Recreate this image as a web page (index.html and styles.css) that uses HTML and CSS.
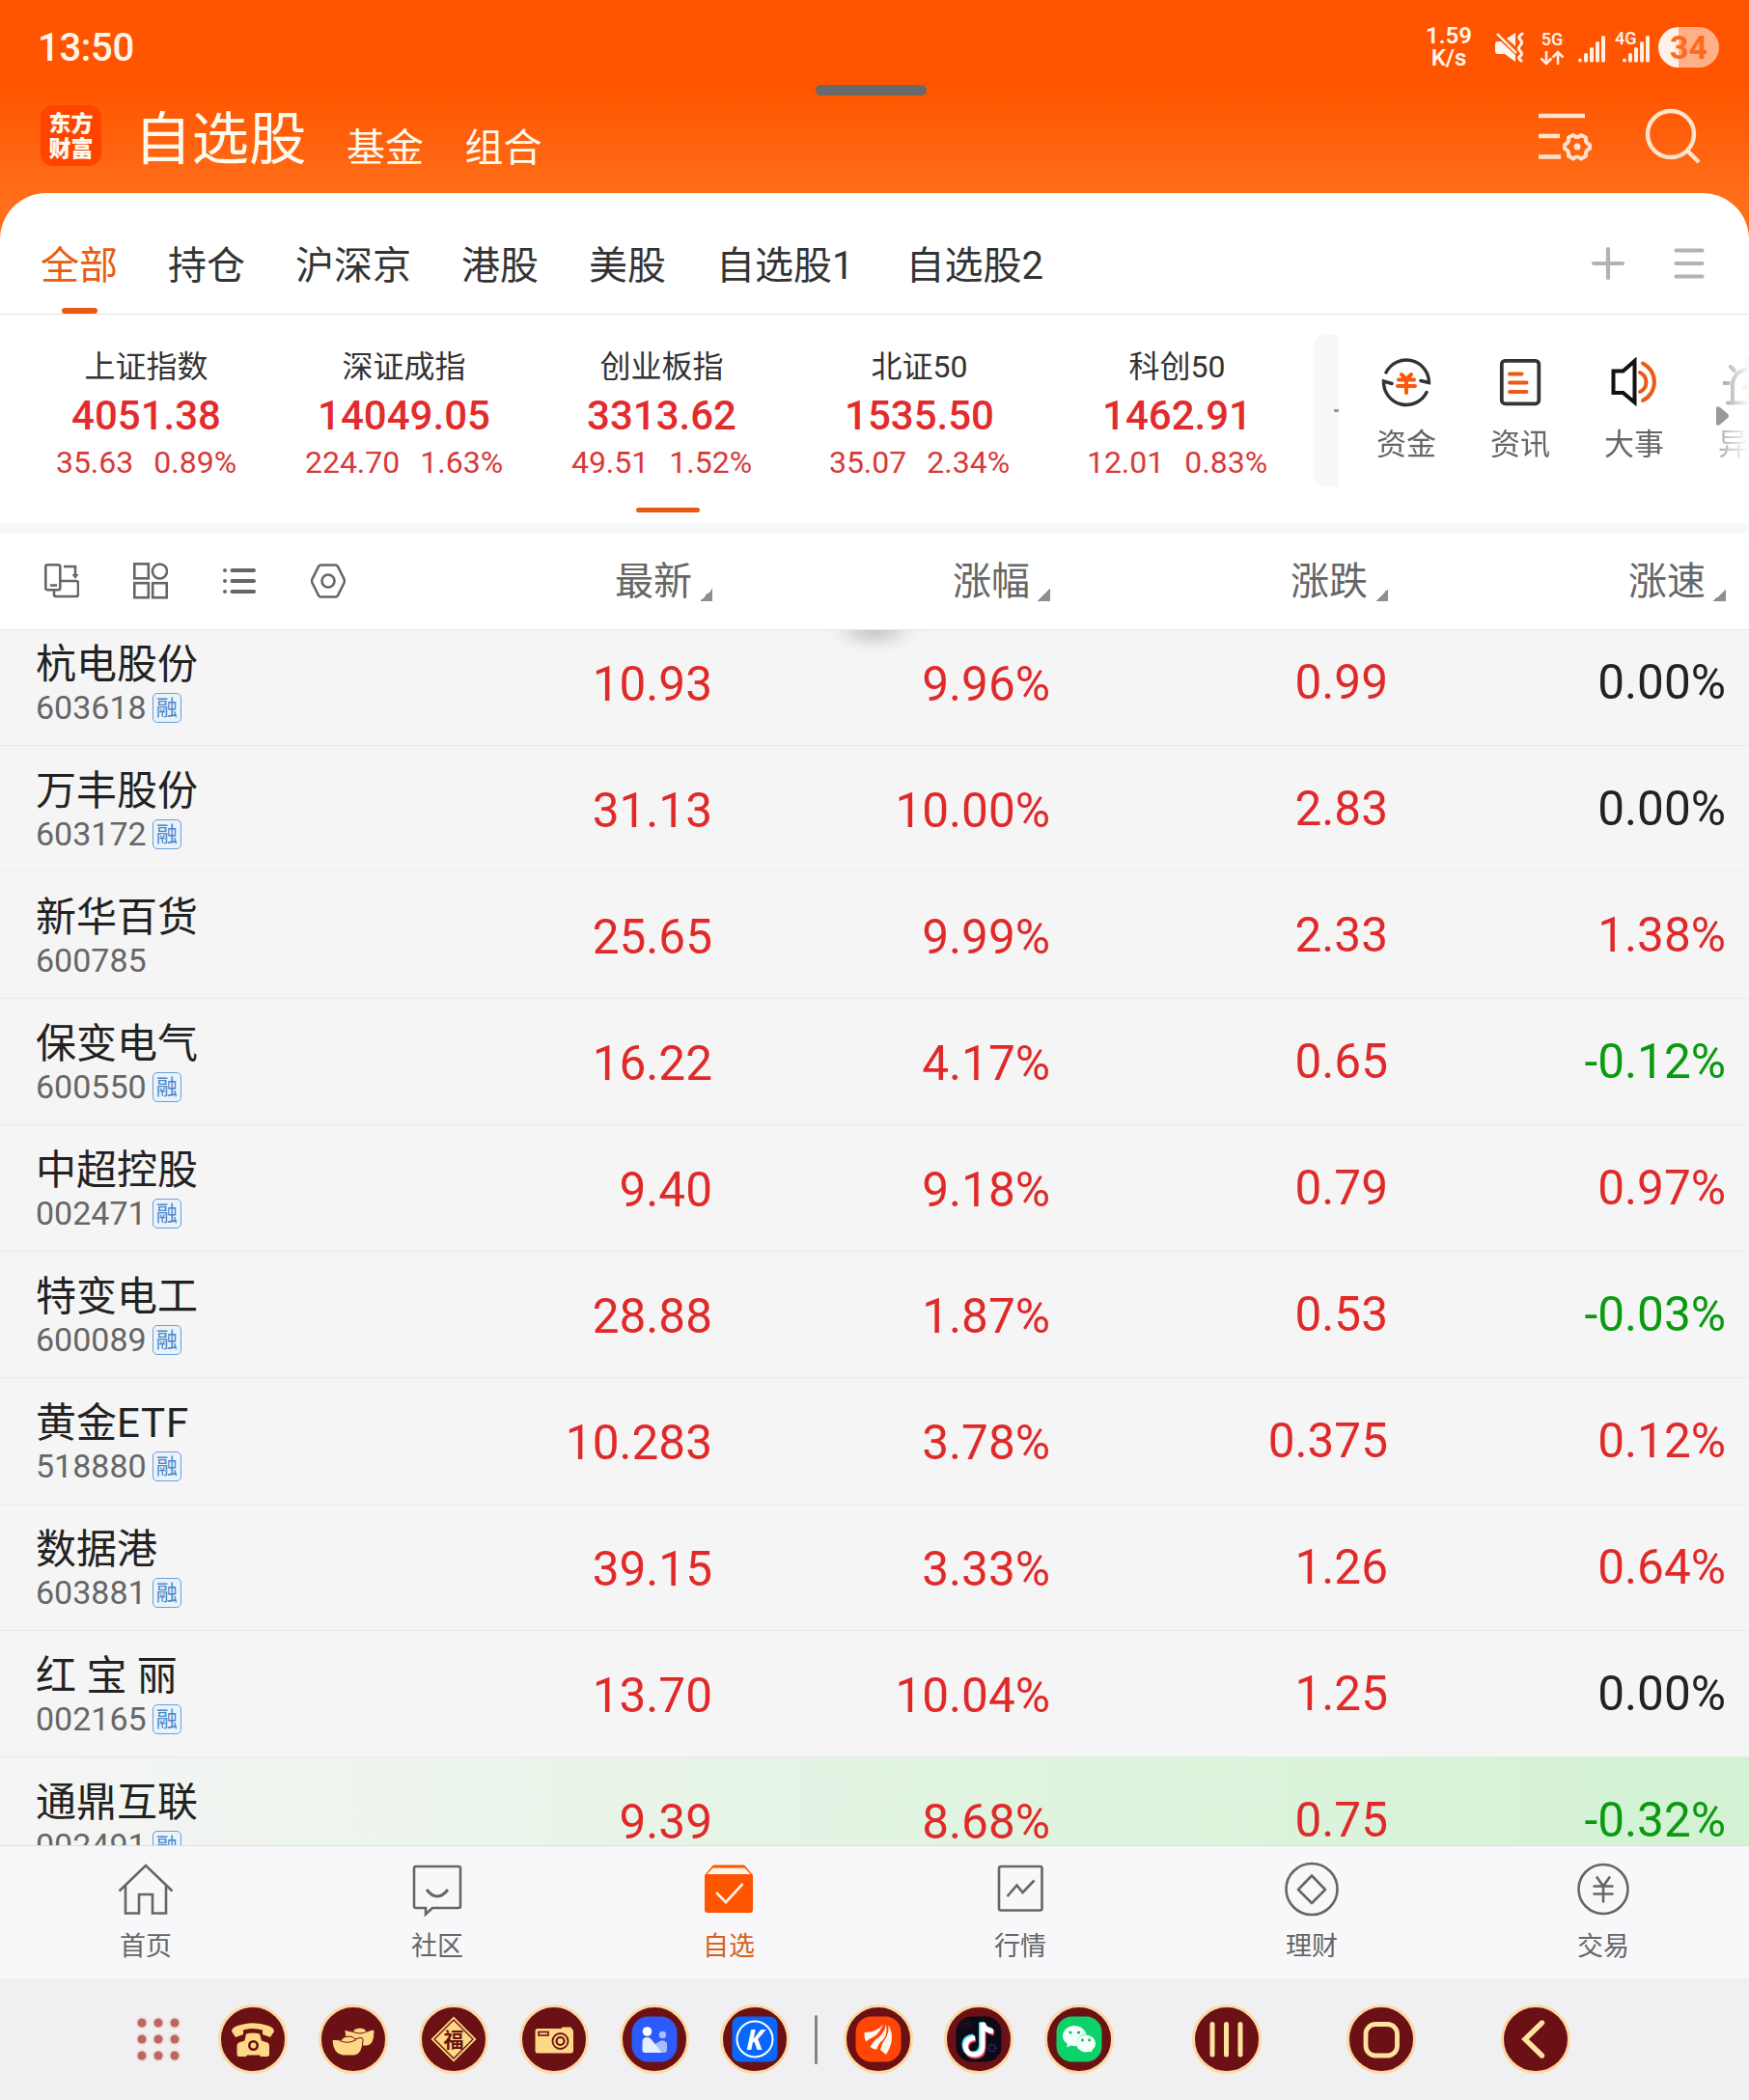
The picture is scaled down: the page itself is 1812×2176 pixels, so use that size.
FILE: index.html
```html
<!DOCTYPE html>
<html lang="zh-CN">
<head>
<meta charset="utf-8">
<title>自选股</title>
<link rel="stylesheet" href="styles.css">
</head>
<body>
<header class="top">
  <div class="status">
    <span class="clock">13:50</span>
    <div class="status-right">
      <div class="speed"><span>1.59</span><span>K/s</span></div>
      <svg class="mute" width="32" height="32" viewBox="0 0 32 32"><path fill="#fff6ee" d="M2 10h5l15 14v7L11 23H4q-3 0-3-3v-7q0-2 1-3zM13 7l9-6v14z"/><path d="M3 2l20 20" stroke="#fff6ee" stroke-width="2.400"/><path d="M29 2q-5 3-2 6t0 6q-3 3 0 6t0 5q-3 2 1 5" fill="none" stroke="#fff6ee" stroke-width="3" stroke-linecap="round"/></svg>
      <div class="net"><span class="net-label">5G</span><svg width="28" height="16" viewBox="0 0 28 16"><path d="M8 1v12M2.500 8.500L8 14l5.500-5.500M20 15V3M14.500 7.500L20 2l5.500 5.500" fill="none" stroke="#ffece0" stroke-width="2.600"/></svg></div>
      <svg class="bars" width="28" height="28" viewBox="0 0 28 28" fill="#fff0e4"><circle cx="2" cy="25.500" r="2"/><rect x="6" y="18" width="4" height="9.500" rx="1.500"/><rect x="12" y="12" width="4" height="15.500" rx="1.500"/><rect x="18" y="6" width="4" height="21.500" rx="1.500"/><rect x="24" y="0" width="4" height="27.500" rx="1.500"/></svg>
      <div class="sim"><span class="net-label">4G</span><svg width="28" height="28" viewBox="0 0 28 28" fill="#fff0e4"><circle cx="2" cy="25.500" r="2"/><rect x="6" y="18" width="4" height="9.500" rx="1.500"/><rect x="12" y="12" width="4" height="15.500" rx="1.500"/><rect x="18" y="6" width="4" height="21.500" rx="1.500"/><rect x="24" y="0" width="4" height="27.500" rx="1.500"/></svg></div>
      <span class="battery">34</span>
    </div>
    <i class="handle"></i>
  </div>
  <div class="title">
    <div class="logo"><span>东方</span><span>财富</span></div>
    <h1>自选股</h1>
    <span class="sub">基金</span>
    <span class="sub">组合</span>
    <div class="title-icons">
      <svg width="56" height="52" viewBox="0 0 56 52" fill="none" stroke="#ffe3cf" stroke-width="4.600"><path d="M0 4h48M0 25h22M0 46.500h23"/><path stroke-width="4" stroke-linejoin="round" d="M36 24q4 4 8 0l5 2.500q-1 5.500 4 7.500v4q-5 2-4 7.500l-5 3q-4-4-8 0l-5-3q1-5.500-4-7.500v-4q5-2 4-7.500z"/><circle cx="40" cy="36" r="3.500" fill="#ffe3cf" stroke="none"/></svg>
      <svg width="58" height="60" viewBox="0 0 58 60" fill="none" stroke="#ffe3cf" stroke-width="4.400"><circle cx="27" cy="27" r="24"/><path d="M43.500 43.500L56 56"/></svg>
    </div>
  </div>
</header>

<section class="sheet">
  <nav class="tabs">
    <span class="tab active">全部</span><span class="tab">持仓</span><span class="tab">沪深京</span><span class="tab">港股</span><span class="tab">美股</span><span class="tab">自选股1</span><span class="tab">自选股2</span>
    <div class="tab-tools">
      <svg width="36" height="36" viewBox="0 0 36 36" stroke="#b3b3b3" stroke-width="4.200" stroke-linecap="round"><path d="M18 3v30M3 18h30"/></svg>
      <svg width="32" height="36" viewBox="0 0 32 36" stroke="#b3b3b3" stroke-width="4.200" stroke-linecap="round"><path d="M2.500 4.500h27M2.500 18h27M2.500 31.500h27"/></svg>
    </div>
  </nav>

  <div class="market">
    <div class="indices">
      <div class="index"><span class="iname">上证指数</span><b>4051.38</b><p><span>35.63</span><span>0.89%</span></p></div>
      <div class="index"><span class="iname">深证成指</span><b>14049.05</b><p><span>224.70</span><span>1.63%</span></p></div>
      <div class="index"><span class="iname">创业板指</span><b>3313.62</b><p><span>49.51</span><span>1.52%</span></p></div>
      <div class="index"><span class="iname">北证50</span><b>1535.50</b><p><span>35.07</span><span>2.34%</span></p></div>
      <div class="index"><span class="iname">科创50</span><b>1462.91</b><p><span>12.01</span><span>0.83%</span></p></div>
      <i class="pager"></i>
    </div>
    <div class="drawer"><i></i></div>
    <div class="shortcuts">
      <div class="shortcut"><svg width="52" height="52" viewBox="0 0 52 52" fill="none" stroke="#333" stroke-width="3.400"><path stroke-linecap="round" d="M5 16A23.500 23.500 0 0 1 49.500 26.500L41 24.500M47 36.500A23.500 23.500 0 0 1 2.500 25L11 27.500"/><path stroke="#f9570a" stroke-width="4" stroke-linecap="round" d="M21 18l5 5 5-5M26 24v13M18 23.500h16M17 30h18"/></svg><span>资金</span></div>
      <div class="shortcut"><svg width="52" height="52" viewBox="0 0 52 52" fill="none"><rect x="6.800" y="3.800" width="38.500" height="44.500" rx="3.500" stroke="#333" stroke-width="3.800"/><path d="M15 17.500h12.500M15 26.500h17.500M15 36h17.500" stroke="#ea5b18" stroke-width="4" stroke-linecap="round"/></svg><span>资讯</span></div>
      <div class="shortcut"><svg width="52" height="52" viewBox="0 0 52 52" fill="none" stroke-width="4"><path stroke="#111" d="M4.500 14.500h10L26.500 4v43L14.500 37H4.500z"/><path stroke="#ea5b18" stroke-linecap="round" d="M32 16a11 11 0 0 1 0 20M35 6.500a21.500 21.500 0 0 1 0 38.500"/></svg><span>大事</span></div>
      <div class="shortcut"><svg width="52" height="52" viewBox="0 0 52 52" fill="none" stroke="#444" stroke-width="4" stroke-linecap="round"><path d="M10 47V29a16 16 0 0 1 32 0v18M5 47.500h42M1 27h5M8 10l4 4M26 2v6"/><path stroke="#f60" d="M28 24l-5 8h7l-4 7"/></svg><span>异动</span></div>
    </div>
    <svg class="more" width="14" height="20" viewBox="0 0 14 20"><path fill="#999" d="M0 2q0-3 4-1l8 7q2 2 0 4l-8 7q-4 2-4-1z"/></svg>
  </div>
</section>

<div class="cols head">
  <div class="tools">
    <svg width="36" height="36" viewBox="0 0 36 36" fill="none" stroke="#666" stroke-width="2.600"><rect x="1.300" y="1.300" width="15" height="26" rx="2"/><path d="M10 28v4q0 2 2 2h21q2 0 2-2V20q0-2-2-2H17M6 22.500h7M20 3h12v9"/><path d="M28.500 11h7L32 16z" fill="#666" stroke="none"/></svg>
    <svg width="36" height="38" viewBox="0 0 36 38" fill="none" stroke="#666" stroke-width="2.600"><rect x="1.300" y="1.300" width="14.500" height="15"/><circle cx="27.500" cy="9" r="7.500"/><rect x="1.300" y="21.200" width="14.500" height="15"/><rect x="20.200" y="21.200" width="14.500" height="15"/></svg>
    <svg width="36" height="30" viewBox="0 0 36 30" stroke="#666" stroke-width="4" stroke-linecap="round"><path d="M3 4h.01M3 15h.01M3 26h.01M10.500 4H33M10.500 15H33M10.500 26H33"/></svg>
    <svg width="36" height="36" viewBox="0 0 36 36" fill="none" stroke="#666" stroke-width="2.600"><path stroke-linejoin="round" d="M10.500 1.500h15q1.500 0 2.500 1.500l6.500 13q.8 2 0 4L28 33q-1 1.500-2.500 1.500h-15Q9 34.500 8 33L1.500 20q-.8-2 0-4L8 3q1-1.500 2.500-1.500z"/><circle cx="18" cy="18" r="6.500"/></svg>
  </div>
  <div class="th">最新<i></i></div><div class="th">涨幅<i></i></div><div class="th">涨跌<i></i></div><div class="th">涨速<i></i></div>
</div>

<main class="list">
  <i class="pull"></i>
  <div class="cols row"><div class="stock"><span class="name">杭电股份</span><span class="code">603618<em>融</em></span></div><span class="v up">10.93</span><span class="v up">9.96%</span><span class="v up">0.99</span><span class="v">0.00%</span></div>
  <div class="cols row"><div class="stock"><span class="name">万丰股份</span><span class="code">603172<em>融</em></span></div><span class="v up">31.13</span><span class="v up">10.00%</span><span class="v up">2.83</span><span class="v">0.00%</span></div>
  <div class="cols row"><div class="stock"><span class="name">新华百货</span><span class="code">600785</span></div><span class="v up">25.65</span><span class="v up">9.99%</span><span class="v up">2.33</span><span class="v up">1.38%</span></div>
  <div class="cols row"><div class="stock"><span class="name">保变电气</span><span class="code">600550<em>融</em></span></div><span class="v up">16.22</span><span class="v up">4.17%</span><span class="v up">0.65</span><span class="v down">-0.12%</span></div>
  <div class="cols row"><div class="stock"><span class="name">中超控股</span><span class="code">002471<em>融</em></span></div><span class="v up">9.40</span><span class="v up">9.18%</span><span class="v up">0.79</span><span class="v up">0.97%</span></div>
  <div class="cols row"><div class="stock"><span class="name">特变电工</span><span class="code">600089<em>融</em></span></div><span class="v up">28.88</span><span class="v up">1.87%</span><span class="v up">0.53</span><span class="v down">-0.03%</span></div>
  <div class="cols row"><div class="stock"><span class="name">黄金<span class="latin">ETF</span></span><span class="code">518880<em>融</em></span></div><span class="v up">10.283</span><span class="v up">3.78%</span><span class="v up">0.375</span><span class="v up">0.12%</span></div>
  <div class="cols row"><div class="stock"><span class="name">数据港</span><span class="code">603881<em>融</em></span></div><span class="v up">39.15</span><span class="v up">3.33%</span><span class="v up">1.26</span><span class="v up">0.64%</span></div>
  <div class="cols row"><div class="stock"><span class="name">红 宝 丽</span><span class="code">002165<em>融</em></span></div><span class="v up">13.70</span><span class="v up">10.04%</span><span class="v up">1.25</span><span class="v">0.00%</span></div>
  <div class="cols row flash"><div class="stock"><span class="name">通鼎互联</span><span class="code">002491<em>融</em></span></div><span class="v up">9.39</span><span class="v up">8.68%</span><span class="v up">0.75</span><span class="v down">-0.32%</span></div>
</main>

<nav class="bottom">
  <div class="nav"><svg width="58" height="58" viewBox="0 0 58 58"><path d="M1.500 30.500L29 4l27.500 26.500M8 25v28.500h14V34h14v19.500h14V25"/></svg><span>首页</span></div>
  <div class="nav"><svg width="58" height="58" viewBox="0 0 58 58"><path d="M7 5h44q2 0 2 2v39q0 2-2 2H24l-7 6.500V48H7q-2 0-2-2V7q0-2 2-2z"/><path stroke-width="3" d="M18 29q11 14 22 0"/></svg><span>社区</span></div>
  <div class="nav on"><svg width="58" height="58" viewBox="0 0 58 58"><path fill="#ff5500" stroke="none" d="M4 14l8-9.500Q13 3.500 14 3.500h30q1 0 2 1l8 9.500v36q0 3-3 3H7q-3 0-3-3z"/><path fill="#fff3ea" stroke="none" d="M12.500 6.500h33l6 6.500H6.500z"/><path stroke="#fff3ea" d="M16 32l10 10 17.500-19"/></svg><span>自选</span></div>
  <div class="nav"><svg width="58" height="58" viewBox="0 0 58 58"><rect x="7" y="5" width="44.500" height="45.500" rx="2"/><path d="M15.500 36l10-11.500 6 7.500L43.500 19.500"/></svg><span>行情</span></div>
  <div class="nav"><svg width="58" height="58" viewBox="0 0 58 58"><circle cx="29" cy="28.500" r="26.500"/><path stroke-linejoin="round" d="M29 14.500l14 14.500L29 43 15 29z"/></svg><span>理财</span></div>
  <div class="nav"><svg width="58" height="58" viewBox="0 0 58 58"><circle cx="29" cy="28.500" r="25.500"/><path d="M22 15.500l7 10 7-10M29 25.500v17M18.500 25.500h21M18.500 33.500h21"/></svg><span>交易</span></div>
</nav>

<footer class="dock">
  <svg class="grid" width="52" height="52" viewBox="0 0 52 52"><g fill="#f1dddc"><circle cx="9" cy="9" r="6.500"/><circle cx="26" cy="9" r="6.500"/><circle cx="43" cy="9" r="6.500"/><circle cx="9" cy="26" r="6.500"/><circle cx="26" cy="26" r="6.500"/><circle cx="43" cy="26" r="6.500"/><circle cx="9" cy="43" r="6.500"/><circle cx="26" cy="43" r="6.500"/><circle cx="43" cy="43" r="6.500"/></g><g fill="#ba675e"><circle cx="9" cy="9" r="4.500"/><circle cx="26" cy="9" r="4.500"/><circle cx="43" cy="9" r="4.500"/><circle cx="9" cy="26" r="4.500"/><circle cx="26" cy="26" r="4.500"/><circle cx="43" cy="26" r="4.500"/><circle cx="9" cy="43" r="4.500"/><circle cx="26" cy="43" r="4.500"/><circle cx="43" cy="43" r="4.500"/></g></svg>
  <div class="apps">
    <svg class="app" viewBox="0 0 72 72"><circle class="disc" cx="36" cy="36" r="34.500"/><path fill="#fed885" d="M14 28Q14 24 20 22Q36 16.500 52 22Q58 24 58 28L54 34L46 31V26.500Q36 23.500 26 26.500V31L18 34zM29 30.500q7-2 14 0l2 7 6 2q2 1 2 3v9q0 2.500-2.500 2.500H44l-1-1.500H30L29 54h-7q-2.500 0-2.500-2.500v-9q0-2 2-3l6-2z"/><circle cx="36.500" cy="42.500" r="4.200" fill="none" stroke="#6b1014" stroke-width="2.600"/></svg>
    <svg class="app" viewBox="0 0 72 72"><circle class="disc" cx="36" cy="36" r="34.500"/><g fill="#fed885" stroke="#6b1014" stroke-width="1"><path d="M27 28q-1-2 3-1 3 1 5 1 3-4 8-4t7 4l6-2q2 0 2 2 0 14-8 15H37q-9-1-10-15z"/><path d="M35 28q8 4 15 0" fill="none"/><path d="M14 38q0-2.500 4-1.500l5 .5q3-4 8-4 5 0 7 3l5-1.500q3-.5 3 2 0 15-9 16.500H25Q15 51 14 38z"/><path d="M22 37.500q9 4 17-1" fill="none"/></g></svg>
    <svg class="app" viewBox="0 0 72 72"><circle class="disc" cx="36" cy="36" r="34.500"/><path fill="#fed885" d="M36 12.500L59.500 36 36 59.500 12.500 36z"/><path fill="none" stroke="#6b1014" stroke-width="1.300" d="M36 16L56 36 36 56 16 36z"/><text x="36" y="43.500" text-anchor="middle" class="fu">福</text></svg>
    <svg class="app" viewBox="0 0 72 72"><circle class="disc" cx="36" cy="36" r="34.500"/><path fill="#fed885" d="M18.500 25H44v-1.500h10V25q2 .5 2 3v20q0 2.500-2.500 2.500h-35Q16.500 50.500 16.500 48V27.500q0-2.500 2-2.500z"/><g fill="none" stroke="#6b1014"><rect x="20" y="28.500" width="10" height="3.500" stroke-width="1.600"/><circle cx="42.500" cy="38" r="8" stroke-width="1.800"/><circle cx="42.500" cy="38" r="4" stroke-width="2.200"/></g></svg>
    <svg class="app" viewBox="0 0 72 72"><circle class="disc" cx="36" cy="36" r="34.500"/><rect x="12.500" y="12.500" width="47" height="47" rx="17" fill="#2b5bfb"/><g fill="#a9bcfd"><circle cx="44.500" cy="31.500" r="3.700"/><path d="M35 50V42l5-3q5-4 9 1v7q0 3-3 3z"/></g><circle cx="28.500" cy="28" r="4.800" fill="#fff"/><path fill="#e9eefe" d="M23.500 39q0-5 5-5 3 0 5 3l10 13H26.500q-3 0-3-3z"/></svg>
    <svg class="app" viewBox="0 0 72 72"><circle class="disc" cx="36" cy="36" r="34.500"/><rect x="12.500" y="12.500" width="47" height="47" rx="8" fill="#0867fc"/><circle cx="36" cy="36" r="18.500" fill="none" stroke="#fff" stroke-width="2"/><text x="36" y="46.500" text-anchor="middle" class="kay">K</text></svg>
  </div>
  <i class="rule"></i>
  <div class="apps recent">
    <svg class="app" viewBox="0 0 72 72"><circle class="disc" cx="36" cy="36" r="34.500"/><rect x="12.500" y="12.500" width="47" height="47" rx="16" fill="#ff4604"/><path fill="#fff6f0" d="M21.500 29q13 0 19.500-8.500-3 8-9 12.500-6 3-9 5.500-2-4.500-1.500-9.500zM27.500 44q3-6 9-10 6-5 7.500-13.500Q46 31 40.500 37q-5 4-6 9.500-4 0-7-2.500zM38 47q1-6 5-11 4-6 3.500-14.500 8 14-2.500 30.500-3-2.500-6-5z"/></svg>
    <svg class="app" viewBox="0 0 72 72"><circle class="disc" cx="36" cy="36" r="34.500"/><rect x="12.500" y="12.500" width="47" height="47" rx="16" fill="#0d0a17"/><g fill="none" stroke="#6b2440" stroke-dasharray="1 2"><circle cx="22" cy="21" r="5"/><circle cx="22" cy="21" r="2"/></g><circle cx="50" cy="45" r="3.500" fill="none" stroke="#443a9c" stroke-width="2" stroke-dasharray="1 1.500"/><g fill="none" stroke-width="5"><path stroke="#45e4ea" d="M30.500 33q-10 1-9.500 10 1 8 9 8t8.500-9V18.500q2 7.500 11 8"/><path stroke="#f4406a" d="M33 36q-10 1-9.500 10 1 8 9 8t8.500-9V20q2 7.500 11 10"/><path stroke="#fff" d="M32 34.500q-10 1-9.500 9.500 1 8 9 8t8.500-9V19q2 8 11 9"/></g></svg>
    <svg class="app" viewBox="0 0 72 72"><circle class="disc" cx="36" cy="36" r="34.500"/><rect x="12.500" y="12.500" width="47" height="47" rx="16" fill="#0cd269"/><path fill="#f4fff9" d="M31 22c-7 0-12 5-12 11 0 3 2 6 5 8l-1 3.500 4.500-2q3 1 6 .5c-1-8 4-12 10-12C42 25.500 37 22 31 22z"/><ellipse cx="43" cy="40.500" rx="10" ry="9" fill="#f4fff9"/><path fill="#f4fff9" d="M44 48l5.500 1.500-1-4z"/><g fill="#0cb75c"><circle cx="27" cy="29" r="1.600"/><circle cx="35.500" cy="29" r="1.600"/><circle cx="39.500" cy="37" r="1.400"/><circle cx="46.500" cy="37" r="1.400"/></g></svg>
  </div>
  <div class="keys">
    <svg class="app" viewBox="0 0 72 72"><circle class="disc" cx="36" cy="36" r="34.500"/><path stroke="#ffe3a0" stroke-width="5" stroke-linecap="round" d="M21 20.500v31.500M35.500 20.500v31.500M50 20.500v31.500"/></svg>
    <svg class="app" viewBox="0 0 72 72"><circle class="disc" cx="36" cy="36" r="34.500"/><rect x="20" y="20.500" width="32.500" height="32.500" rx="10" fill="none" stroke="#ffe3a0" stroke-width="4.800"/></svg>
    <svg class="app" viewBox="0 0 72 72"><circle class="disc" cx="36" cy="36" r="34.500"/><path fill="none" stroke="#ffe3a0" stroke-width="5.400" stroke-linecap="round" d="M42.500 19L25 36l17.500 17"/></svg>
  </div>
</footer>
</body>
</html>
```
FILE: styles.css
```css
* { box-sizing: border-box; }
body {
  margin: 0;
  width: 1812px;
  height: 2176px;
  overflow: hidden;
  display: flex;
  flex-direction: column;
  font-family: Roboto, "Noto Sans CJK SC", sans-serif;
  color: #333;
  background: #fff;
}
svg { display: block; flex: none; }
i, em { font-style: normal; }
h1, p { margin: 0; }

/* header */
.top {
  height: 260px;
  flex: none;
  background: linear-gradient(#ff5500 0, #ff5500 90px, #ff6e1a 205px);
}
.status {
  position: relative;
  height: 98px;
  padding: 0 31px 0 39px;
  display: flex;
  justify-content: space-between;
}
.clock { font-size: 40px; font-weight: 500; line-height: 99px; color: #fff6ea; letter-spacing: -.3px; }
.status-right { display: flex; align-items: flex-start; }
.speed {
  width: 60px;
  margin: 26px 17px 0 0;
  display: flex;
  flex-direction: column;
  align-items: center;
  font-size: 24px;
  font-weight: 600;
  line-height: 23px;
  color: #fff6ee;
}
.mute { margin: 33px 14px 0 0; }
.net { width: 28px; margin: 31px 13px 0 0; display: flex; flex-direction: column; align-items: center; }
.net svg { margin-top: 1px; }
.net-label { font-size: 18px; font-weight: 600; line-height: 20px; color: #fff0e4; }
.bars { margin: 37px 10px 0 0; }
.sim { width: 36px; margin: 30px 9px 0 0; display: flex; flex-direction: column; }
.sim svg { margin: -13px 0 0 8px; }
.battery {
  width: 63px;
  height: 42px;
  margin-top: 28px;
  border-radius: 21px;
  background: linear-gradient(90deg, #fff1e9 21px, #ffb088 21px);
  font-size: 34px;
  font-weight: 700;
  line-height: 43px;
  text-align: center;
  color: #ff6a1a;
}
.handle {
  position: absolute;
  left: 845px;
  top: 88px;
  width: 115px;
  height: 11px;
  border-radius: 6px;
  background: #696969;
}
.title { display: flex; padding: 0 50px 0 42px; height: 102px; color: #fffaf0; }
.logo {
  width: 63px;
  height: 63px;
  margin: 11px 34px 0 0;
  padding-top: 4px;
  border-radius: 13px;
  background: #ff4400;
  display: flex;
  flex-direction: column;
  align-items: center;
  font: 900 23px/26px "Noto Sans CJK SC", sans-serif;
}
h1 { font-size: 59.500px; font-weight: 400; line-height: 58px; margin: 18px 41.500px 0 0; }
.sub { font-size: 40px; line-height: 40px; margin: 36px 42.500px 0 0; }
.title-icons { display: flex; gap: 54px; margin: 14px 0 0 auto; }
.title-icons svg:first-child { margin-top: 4px; }

/* sheet */
.sheet { flex: none; height: 353px; margin-top: -60px; border-radius: 48px 48px 0 0; background: #fff; border-bottom: 11px solid #f7f8fa; }
.tabs { height: 126px; padding: 0 46px 0 42px; display: flex; gap: 52px; border-bottom: 1px solid #e2e2e2; }
.tab { position: relative; padding-top: 50px; font-size: 40px; line-height: 51px; }
.tab:nth-child(7) { margin-left: 2px; }
.tab.active { color: #e85d14; }
.tab.active::after { content: ""; position: absolute; left: 22px; bottom: 0; width: 37px; height: 6px; border-radius: 3px; background: #e85a12; }
.tab-tools { margin: 55px 0 0 auto; display: flex; gap: 50px; }
.market { position: relative; height: 216px; display: flex; }
.indices { position: relative; width: 1361px; padding: 32px 8px 0 18px; display: grid; grid-template-columns: repeat(5, 1fr); }
.index { display: flex; flex-direction: column; align-items: center; color: #e22b2b; }
.iname { font-size: 32px; line-height: 44px; color: #333; }
.index b { margin-top: 3px; font-size: 42px; font-weight: 500; line-height: 51px; }
.index p { display: flex; gap: 21px; font-size: 32px; line-height: 46px; color: #d63a3a; }
.pager { position: absolute; left: 659px; top: 200px; width: 66px; height: 5px; border-radius: 3px; background: #e85a12; }
.drawer { width: 26px; height: 157px; margin-top: 21px; border-radius: 11px 0 0 11px; background: #f7f8fa; }
.drawer i { display: block; width: 5px; height: 3px; margin: 77px 0 0 21px; background: #999; }
.shortcuts {
  flex: 1;
  min-width: 0;
  padding: 44px 0 0 11px;
  display: flex;
  overflow: hidden;
  -webkit-mask-image: linear-gradient(90deg, #000 380px, rgba(0,0,0,.55) 392px, transparent 426px);
  mask-image: linear-gradient(90deg, #000 380px, rgba(0,0,0,.55) 392px, transparent 426px);
}
.shortcut { flex: none; width: 118px; display: flex; flex-direction: column; align-items: center; font-size: 31px; line-height: 40px; color: #666; }
.shortcut span { margin-top: 19px; }
.more { position: absolute; left: 1778px; top: 95px; }

/* table */
.cols { display: grid; grid-template-columns: 351px repeat(4, 350px); padding: 0 24px 0 37px; }
.head { flex: none; height: 100px; border-bottom: 1px solid #e6e6e6; padding-left: 46px; grid-template-columns: 342px repeat(4, 350px); background: #fff; }
.tools { display: flex; align-items: center; gap: 56px; padding-bottom: 2px; }
.th { display: flex; justify-content: flex-end; font-size: 40px; line-height: 99px; color: #666; }
.th i { width: 13px; height: 13px; margin: 57px 0 0 8px; background: linear-gradient(135deg, transparent 50%, #8e8e93 50%); }
.list { position: relative; flex: 1; min-height: 0; overflow: hidden; background: #f5f5f5; }
.list > .row:nth-child(2) { margin-top: -11px; }
.pull { position: absolute; left: 856px; top: 0; width: 100px; height: 26px; background: radial-gradient(ellipse 50px 24px at 50% 0, #c6c6c6 0, #dadada 40%, #ededed 72%, #f5f5f5 100%); }
.row { height: 131px; border-bottom: 1px solid #ebebeb; }
.flash { background: linear-gradient(90deg, #f5f5f5, #e1f4e1 55%, #d2f2d3); }
.stock { padding-top: 22px; display: flex; flex-direction: column; }
.name { font-size: 42px; line-height: 50px; color: #222; white-space: pre; }
.latin { letter-spacing: .8px; }
.code { display: flex; align-items: center; font-size: 34px; line-height: 39px; color: #666; }
.code em { width: 30px; height: 31px; margin-left: 6px; border: 1.500px solid #6a9fd8; border-radius: 5px; background: #eaf3fc; color: #4a86c8; font-size: 22px; line-height: 29px; text-align: center; display: flex; justify-content: center; }
.v { font-size: 49.500px; line-height: 134px; text-align: right; color: #222; }
.v:nth-child(n+4) { line-height: 131px; }
.v.up { color: #e02a2a; }
.v.down { color: #0a9a10; }

/* bottom navigation */
.bottom { flex: none; height: 138px; display: grid; grid-template-columns: repeat(6, 302px); background: #f8f8fb; border-top: 1px solid #dcdfdc; }
.nav { padding-top: 16px; display: flex; flex-direction: column; align-items: center; font-size: 27px; line-height: 36px; color: #666; }
.nav svg { fill: none; stroke: #666; stroke-width: 2.600; }
.nav span { margin-top: 12px; }
.nav.on { color: #d9601a; }

/* system dock */
.dock { flex: none; height: 126px; padding-left: 138px; display: flex; align-items: center; background: #f0f0f2; }
.app { width: 72px; height: 72px; }
.disc { fill: #6b1014; stroke: #fdd9a3; stroke-width: 3; }
.apps, .keys { display: flex; gap: 32px; }
.grid { margin-right: 36px; }
.rule { width: 3px; height: 51px; margin: 0 27px 0 26px; background: #848484; border-radius: 2px; }
.keys { gap: 88px; margin-left: 81px; }
.fu { font: 700 21px "Noto Sans CJK SC", sans-serif; fill: #6b1014; }
.kay { font: italic 700 29px "Open Sans", sans-serif; fill: #fff; }
```
